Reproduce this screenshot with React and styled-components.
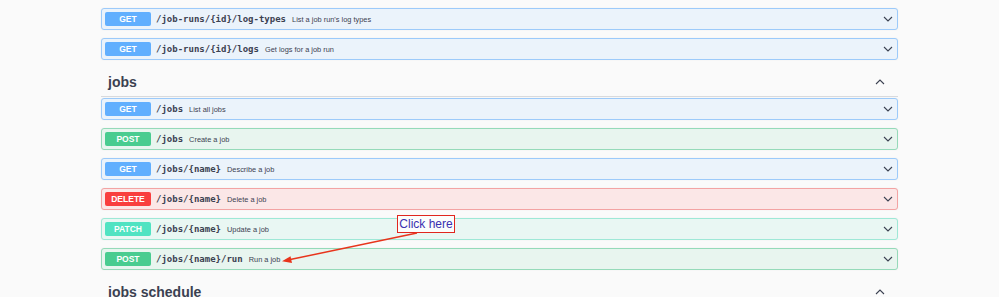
import React from 'react';
import styled, { createGlobalStyle } from 'styled-components';

const GlobalStyle = createGlobalStyle`
  html, body {
    margin: 0;
    padding: 0;
    background: #fafafa;
    font-family: "Liberation Sans", Arial, sans-serif;
    color: #3b4151;
  }
`;

const methods = {
  GET: { badge: '#61affe', bg: '#ebf3fb', border: '#9ccafa' },
  POST: { badge: '#49cc90', bg: '#e8f5ef', border: '#95dab9' },
  DELETE: { badge: '#f93e3e', bg: '#fbe7e7', border: '#f3a3a3' },
  PATCH: { badge: '#50e3c2', bg: '#e9f7f3', border: '#9ee8d6' },
};

const Page = styled.div`
  position: relative;
  width: 999px;
  height: 297px;
  overflow: hidden;
`;

const Wrapper = styled.div`
  width: 797px;
  margin: 0 auto;
  padding-top: 8px;
`;

const Block = styled.div`
  display: flex;
  align-items: center;
  box-sizing: border-box;
  height: 22px;
  margin-bottom: 8px;
  padding: 0 4px 0 3px;
  border: 1px solid ${({ method }) => methods[method].border};
  border-radius: 3px;
  background: ${({ method }) => methods[method].bg};
  box-shadow: 0 0 2px rgba(0, 0, 0, 0.06);
`;

const Badge = styled.span`
  display: flex;
  align-items: center;
  justify-content: center;
  box-sizing: border-box;
  min-width: 46px;
  height: 14px;
  padding: 0 6px;
  border-radius: 2px;
  background: ${({ method }) => methods[method].badge};
  color: #fff;
  font-size: 8.5px;
  font-weight: 700;
`;

const Path = styled.span`
  margin-left: 5px;
  font-family: "DejaVu Sans Mono", "Liberation Mono", monospace;
  font-size: 9px;
  font-weight: 700;
  color: #3b4151;
`;

const Summary = styled.span`
  margin-left: 6px;
  font-size: 7.4px;
  color: #3b4151;
`;

const Spacer = styled.div`
  flex: 1;
`;

const Chevron = styled.svg`
  width: 10px;
  height: 6px;
`;

const TagHeader = styled.div`
  display: flex;
  align-items: center;
  box-sizing: border-box;
  height: 29px;
  margin-bottom: 1px;
  padding: 0 13px 0 7px;
  border-bottom: 1px solid #d8dadd;
`;

const TagTitle = styled.h3`
  margin: 0;
  font-size: 14px;
  font-weight: 700;
  line-height: 28px;
  color: #3b4151;
`;

const Callout = styled.div`
  position: absolute;
  left: 397px;
  top: 215px;
  display: flex;
  align-items: center;
  justify-content: center;
  box-sizing: border-box;
  width: 58px;
  height: 18px;
  border: 1.5px solid #e0261e;
  background: #fbfdfc;
  color: #3a2fb0;
  font-size: 12px;
  white-space: nowrap;
`;

const Overlay = styled.svg`
  position: absolute;
  left: 0;
  top: 0;
  width: 999px;
  height: 297px;
  pointer-events: none;
`;

const ChevronIcon = ({ up }) => (
  <Chevron viewBox="0 0 10 6">
    <polyline
      points={up ? '1,5 5,1 9,5' : '1,1 5,5 9,1'}
      fill="none"
      stroke="#3b4151"
      strokeWidth="1.1"
    />
  </Chevron>
);

const Operation = ({ method, path, summary }) => (
  <Block method={method}>
    <Badge method={method}>{method}</Badge>
    <Path>{path}</Path>
    <Summary>{summary}</Summary>
    <Spacer />
    <ChevronIcon />
  </Block>
);

const Tag = ({ name }) => (
  <TagHeader>
    <TagTitle>{name}</TagTitle>
    <Spacer />
    <ChevronIcon up />
  </TagHeader>
);

const jobRuns = [
  { method: 'GET', path: '/job-runs/{id}/log-types', summary: "List a job run's log types" },
  { method: 'GET', path: '/job-runs/{id}/logs', summary: 'Get logs for a job run' },
];

const jobs = [
  { method: 'GET', path: '/jobs', summary: 'List all jobs' },
  { method: 'POST', path: '/jobs', summary: 'Create a job' },
  { method: 'GET', path: '/jobs/{name}', summary: 'Describe a job' },
  { method: 'DELETE', path: '/jobs/{name}', summary: 'Delete a job' },
  { method: 'PATCH', path: '/jobs/{name}', summary: 'Update a job' },
  { method: 'POST', path: '/jobs/{name}/run', summary: 'Run a job' },
];

export default function App() {
  return (
    <Page>
      <GlobalStyle />
      <Wrapper>
        {jobRuns.map((op, i) => (
          <Operation key={i} {...op} />
        ))}
        <Tag name="jobs" />
        {jobs.map((op, i) => (
          <Operation key={i} {...op} />
        ))}
        <Tag name="jobs schedule" />
      </Wrapper>

      <Callout>Click here</Callout>
      <Overlay viewBox="0 0 999 297">
        <line x1="417" y1="233" x2="289" y2="259.8" stroke="#e8341c" strokeWidth="1.5" />
        <polygon points="282,261.3 290.5,256.2 292,263" fill="#e8341c" />
      </Overlay>
    </Page>
  );
}
